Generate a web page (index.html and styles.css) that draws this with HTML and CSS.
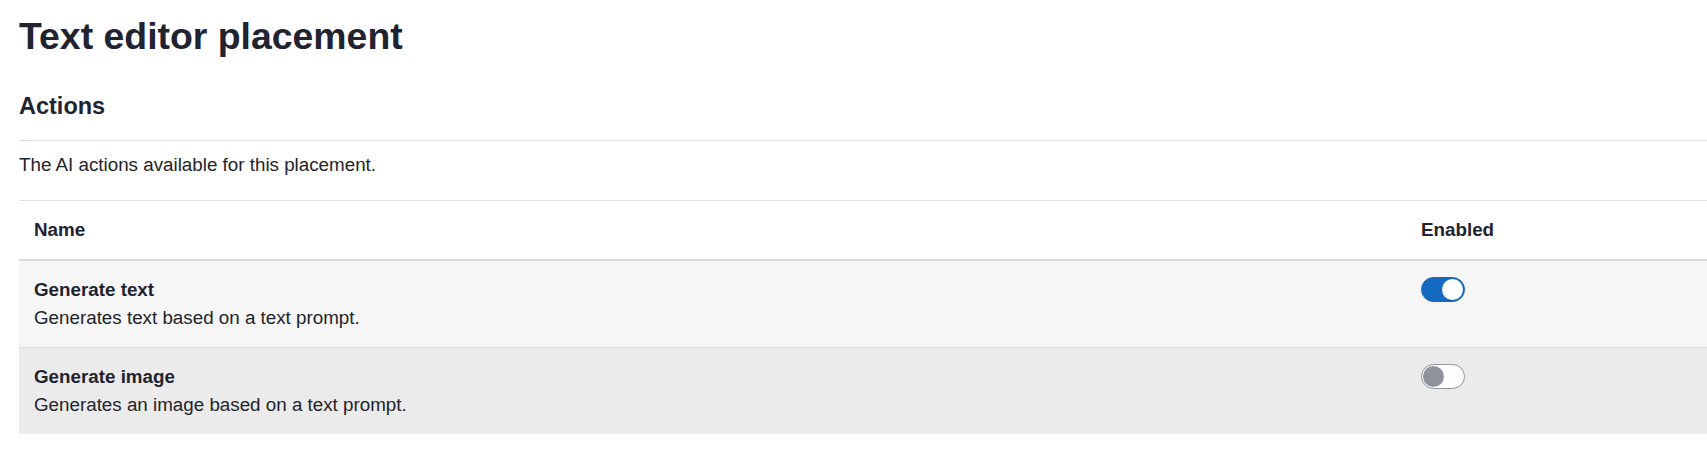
FILE: index.html
```html
<!DOCTYPE html>
<html lang="en">
<head>
    <meta charset="UTF-8">
    <meta name="viewport" content="width=device-width, initial-scale=1.0">
    <title>Text editor placement</title>
    <link rel="stylesheet" href="styles.css">
</head>
<body>
    <main class="page">
        <h1 class="page-title">Text editor placement</h1>

        <section class="actions">
            <h2 class="section-title">Actions</h2>
            <p class="section-desc">The AI actions available for this placement.</p>

            <table class="actions-table">
                <thead>
                    <tr>
                        <th class="col-name">Name</th>
                        <th class="col-enabled">Enabled</th>
                    </tr>
                </thead>
                <tbody>
                    <tr class="row-odd">
                        <td>
                            <div class="action-name">Generate text</div>
                            <div class="action-desc">Generates text based on a text prompt.</div>
                        </td>
                        <td>
                            <label class="toggle">
                                <input type="checkbox" checked>
                                <span class="slider"></span>
                            </label>
                        </td>
                    </tr>
                    <tr class="row-even">
                        <td>
                            <div class="action-name">Generate image</div>
                            <div class="action-desc">Generates an image based on a text prompt.</div>
                        </td>
                        <td>
                            <label class="toggle">
                                <input type="checkbox">
                                <span class="slider"></span>
                            </label>
                        </td>
                    </tr>
                </tbody>
            </table>
        </section>
    </main>
</body>
</html>
```

FILE: styles.css
```css
* {
    margin: 0;
    padding: 0;
    box-sizing: border-box;
}

body {
    font-family: "Liberation Sans", Arial, sans-serif;
    font-size: 18.8px;
    line-height: 28px;
    color: #232429;
    background-color: #fff;
}

.page {
    padding-left: 19px;
}

.page-title {
    font-size: 37.4px;
    line-height: 45px;
    font-weight: bold;
    color: #222330;
    padding-top: 14px;
}

.section-title {
    font-size: 23.5px;
    line-height: 28px;
    font-weight: bold;
    color: #222330;
    margin-top: 33px;
    padding-bottom: 20px;
    border-bottom: 1px solid #dedfe4;
}

.section-desc {
    margin-top: 10px;
    margin-bottom: 21px;
}

.actions-table {
    width: 100%;
    border-collapse: collapse;
    border-top: 1px solid #dedfe4;
}

.actions-table th {
    text-align: left;
    font-weight: bold;
    color: #222330;
    padding: 15px;
    border-bottom: 2px solid #d8d9e0;
}

.actions-table .col-enabled {
    width: 301px;
}

.actions-table td {
    vertical-align: top;
    padding: 15px;
}

.row-odd {
    background-color: #f6f6f6;
    border-bottom: 1px solid #dcdcdf;
}

.row-even {
    background-color: #ebebeb;
}

.action-name {
    font-weight: bold;
    color: #222330;
}

/* toggle switch */
.toggle {
    display: inline-block;
    position: relative;
    width: 44px;
    height: 25px;
    margin-top: 1px;
}

.toggle input {
    display: none;
}

.slider {
    position: absolute;
    inset: 0;
    border-radius: 13px;
    background-color: #fff;
    border: 1px solid #8e929c;
}

.slider::before {
    content: "";
    position: absolute;
    width: 21px;
    height: 21px;
    left: 1px;
    top: 1px;
    border-radius: 50%;
    background-color: #8e929c;
}

.toggle input:checked + .slider {
    background-color: #1569c1;
    border-color: #1569c1;
}

.toggle input:checked + .slider::before {
    left: 20px;
    background-color: #fff;
}
```
